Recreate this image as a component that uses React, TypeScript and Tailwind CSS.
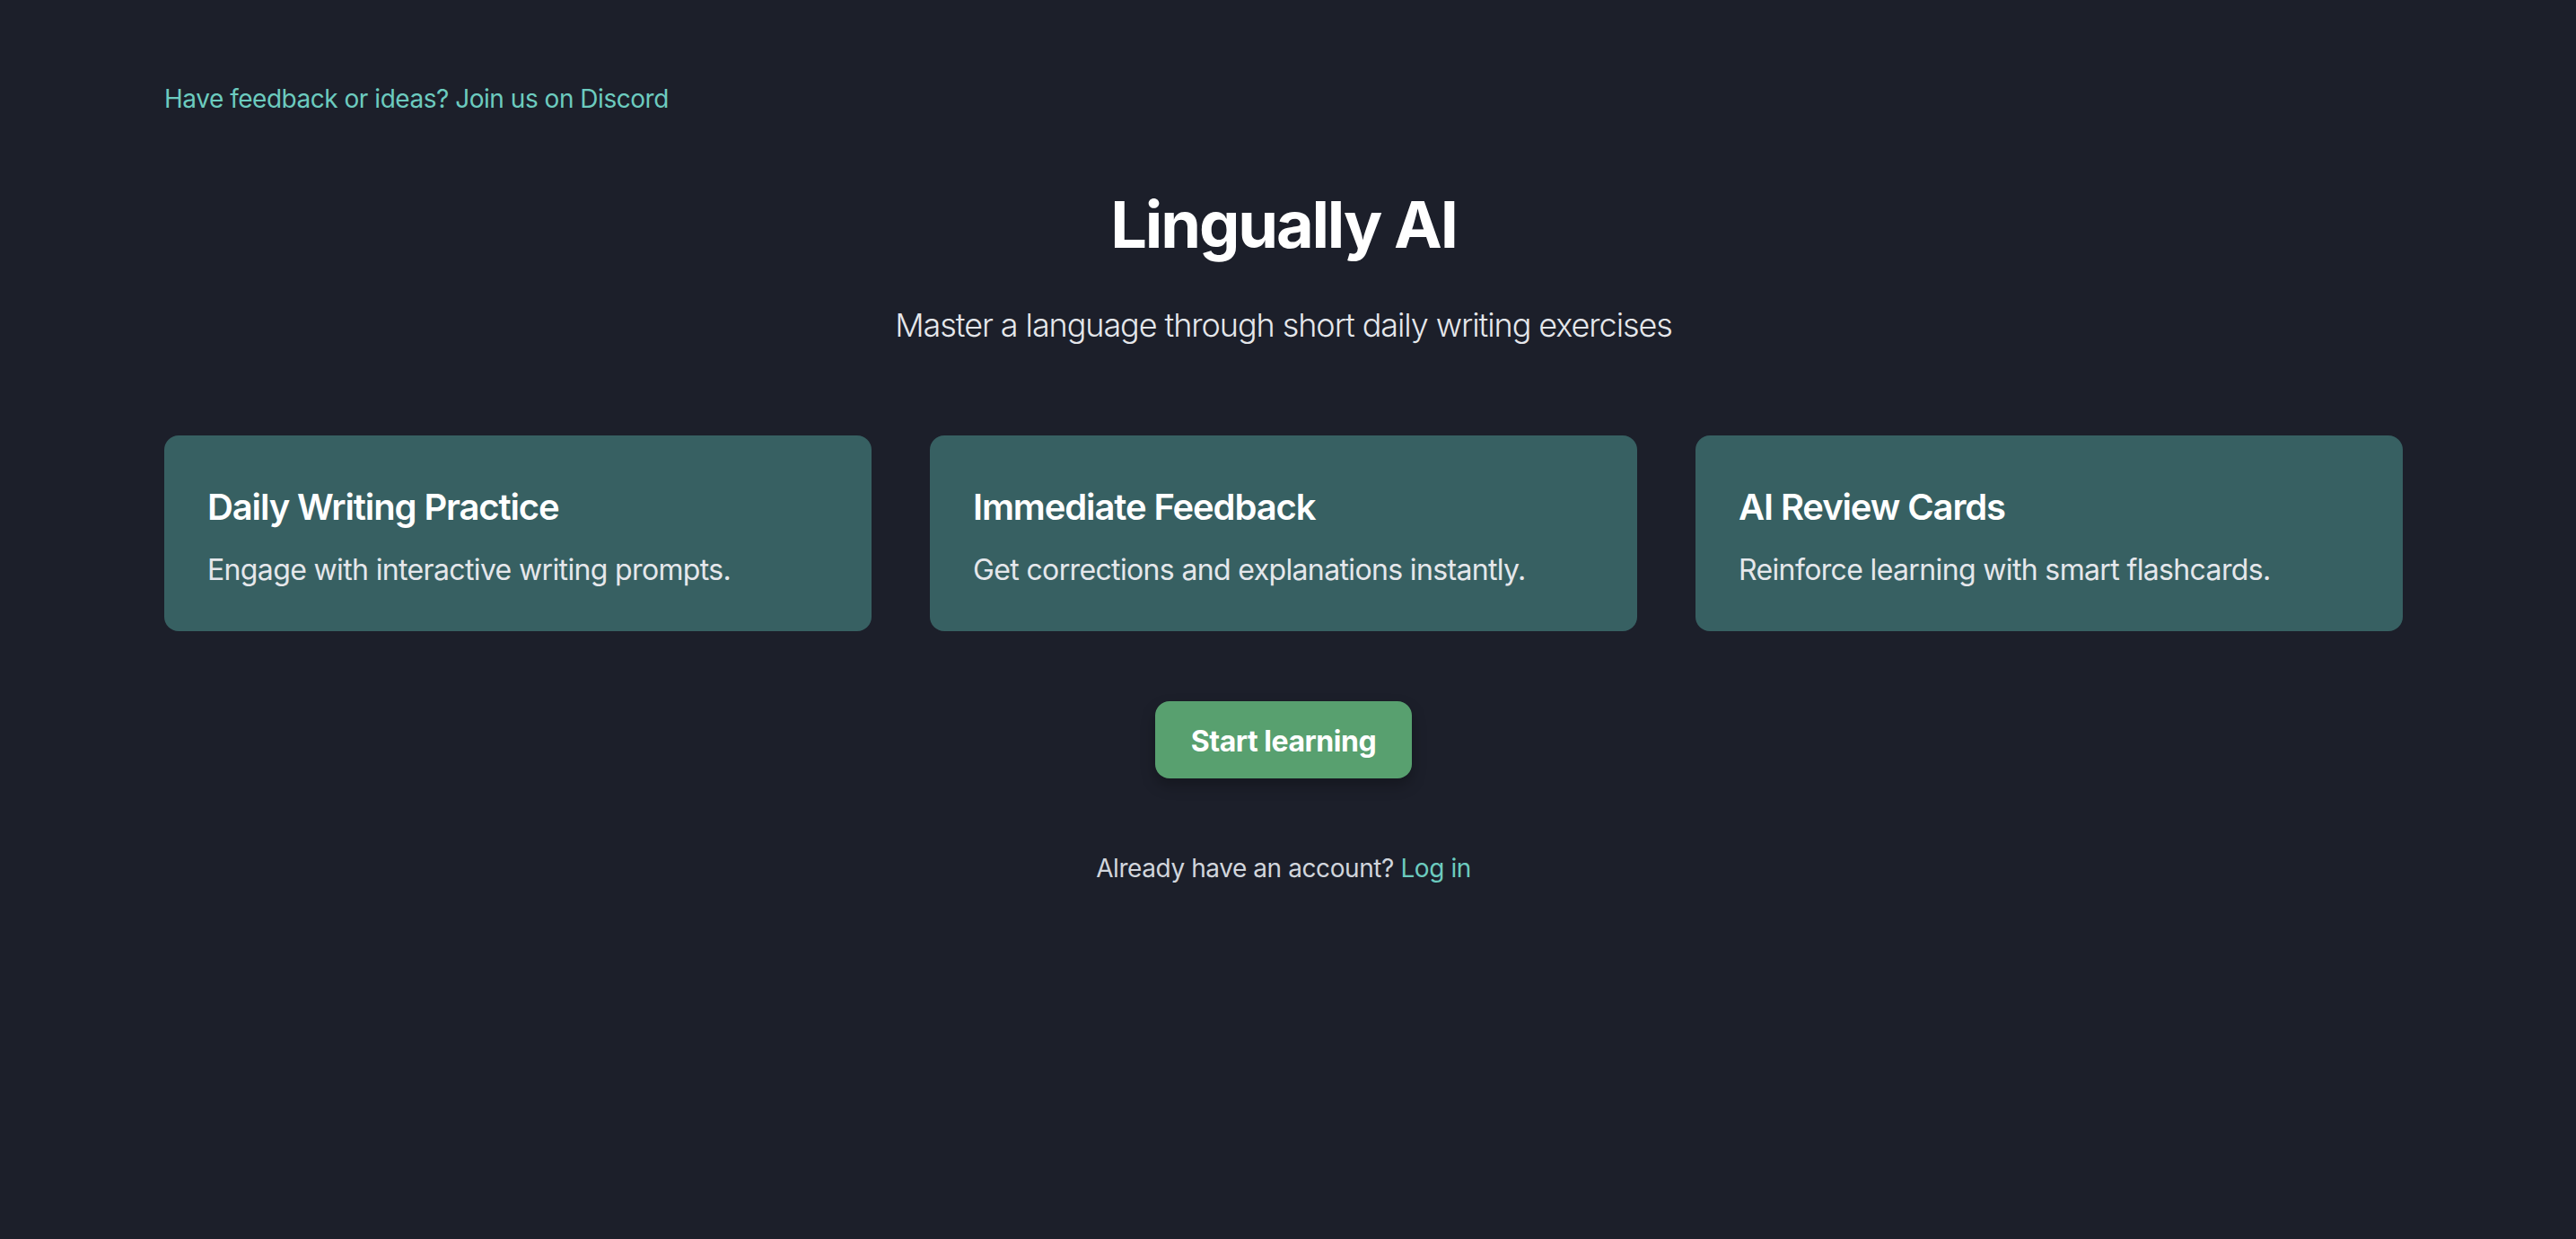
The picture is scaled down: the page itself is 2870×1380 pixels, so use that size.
const features = [
  {
    title: "Daily Writing Practice",
    text: "Engage with interactive writing prompts.",
  },
  {
    title: "Immediate Feedback",
    text: "Get corrections and explanations instantly.",
  },
  {
    title: "AI Review Cards",
    text: "Reinforce learning with smart flashcards.",
  },
];

function FeatureCard({ title, text }: { title: string; text: string }) {
  return (
    <div className="rounded-[16px] bg-[#376062] px-[48px] pt-[52px] pb-[44px]">
      <h3 className="text-[40px] leading-[56px] font-semibold tracking-[-0.028em] text-white">{title}</h3>
      <p className="mt-[18px] text-[32px] leading-[48px] tracking-[-0.02em] text-gray-200">{text}</p>
    </div>
  );
}

export default function App() {
  return (
    <div className="min-h-screen bg-[#1c1f2a] pt-[90px] pl-[183px] pr-[193px] font-['Inter','Noto_Sans',sans-serif]">
      <a href="#" className="block text-[28px] leading-[40px] tracking-[-0.017em] text-[#6ccbbf]">
        Have feedback or ideas? Join us on Discord
      </a>

      <div className="mt-[80px] flex flex-col items-center">
        <h1 className="text-[72px] leading-[80px] font-bold tracking-[-0.03em] text-white">Lingually AI</h1>
        <p className="mt-[44px] text-[36px] leading-[56px] font-light tracking-[-0.03em] text-gray-200">
          Master a language through short daily writing exercises
        </p>
      </div>

      <div className="mt-[95px] grid grid-cols-3 gap-[65px]">
        {features.map((f) => (
          <FeatureCard key={f.title} {...f} />
        ))}
      </div>

      <div className="mt-[78px] flex justify-center">
        <button className="h-[86px] rounded-[16px] bg-[#58a06f] px-[40px] pt-[3px] text-[32px] font-bold tracking-[-0.015em] text-white shadow-[0_8px_16px_rgba(0,0,0,0.25)]">
          Start learning
        </button>
      </div>

      <p className="mt-[80px] text-center text-[28px] leading-[40px] tracking-[-0.015em] text-gray-300">
        Already have an account?{" "}
        <a href="#" className="text-[#6ccbbf]">
          Log in
        </a>
      </p>
    </div>
  );
}
